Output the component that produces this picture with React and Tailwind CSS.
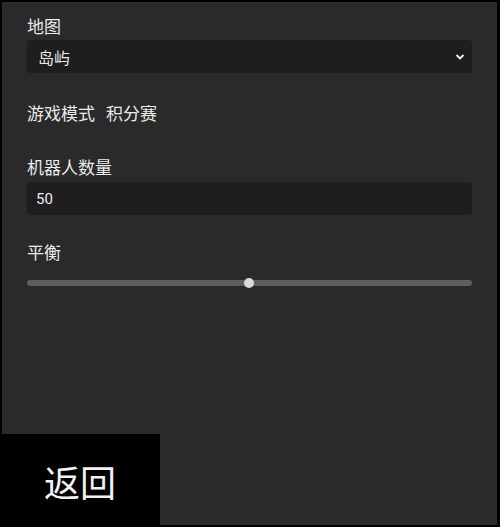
export default function App() {
  return (
    <div className="relative w-[500px] h-[527px] bg-black p-[2px] overflow-hidden">
      <div className="h-[523px] w-[495px] bg-[#2a2a2a] pt-3 pl-[25px] pr-[25px] font-['Noto_Sans_CJK_SC','Noto_Sans',sans-serif] text-[#ebebeb]">
        <div className="text-[17px] leading-6">地图</div>
        <div className="mt-[2px] h-[33px] rounded bg-[#1e1e1e] flex items-center justify-between pl-[11px] pr-[7px]">
          <span className="text-base leading-6">岛屿</span>
          <svg width="10" height="8" viewBox="0 0 10 8">
            <path d="M1.5 2 L5 5.5 L8.5 2" stroke="#f0f0f0" strokeWidth="1.8" fill="none" />
          </svg>
        </div>
        <div className="mt-[28px] text-[17px] leading-6 flex gap-[11px]">
          <span>游戏模式</span>
          <span>积分赛</span>
        </div>
        <div className="mt-[30px] text-[17px] leading-6">机器人数量</div>
        <div className="mt-[3px] h-[33px] rounded bg-[#1e1e1e] flex items-center pl-[9px]">
          <span className="text-[15px] leading-6 font-['Roboto','Noto_Sans',sans-serif]">50</span>
        </div>
        <div className="mt-[25px] text-[17px] leading-6">平衡</div>
        <div className="mt-[14px] relative h-[10px] flex items-center">
          <div className="h-[6px] w-full rounded-full bg-[#5f5f5f]" />
          <div className="absolute left-[217px] top-0 h-[10px] w-[10px] rounded-full bg-[#dcdcdc]" />
        </div>
      </div>
      <button className="absolute left-0 bottom-0 w-[160px] h-[93px] bg-black flex items-center justify-center text-[36px] leading-none text-[#f2f2f2] font-['Noto_Sans_CJK_SC','Noto_Sans',sans-serif]">
        返回
      </button>
    </div>
  );
}
